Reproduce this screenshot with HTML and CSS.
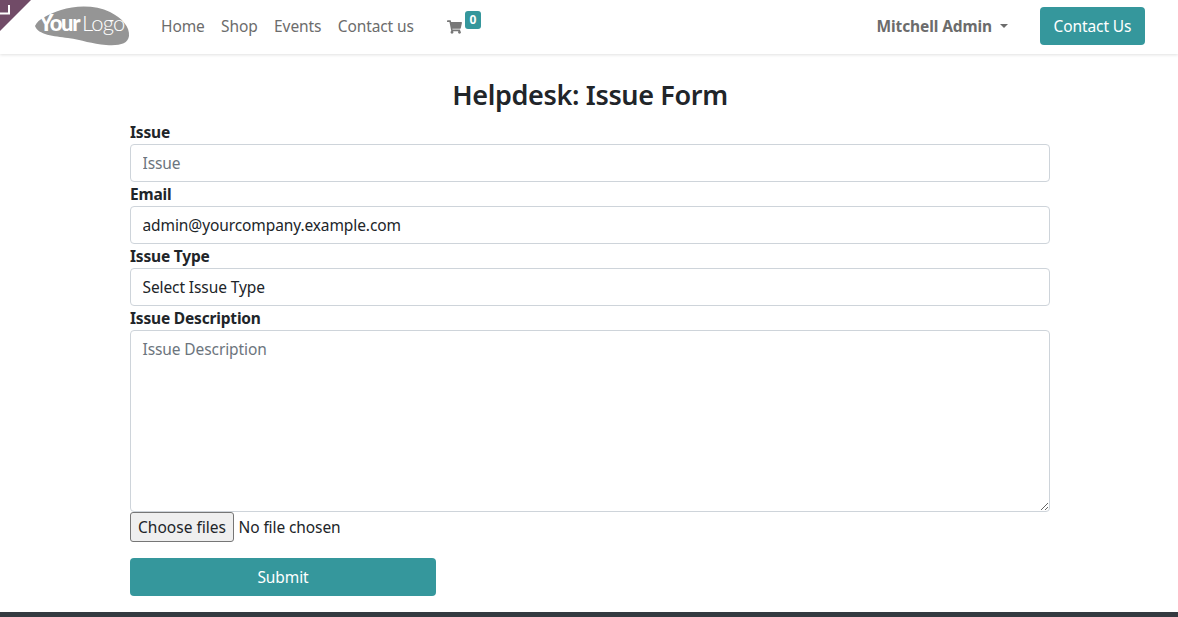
FILE: index.html
```html
<!DOCTYPE html>
<html lang="en">
<head>
<meta charset="utf-8">
<title>Helpdesk: Issue Form</title>
<link rel="stylesheet" href="styles.css">
</head>
<body>
<div class="page">
  <div class="ribbon">
    <svg width="32" height="32" viewBox="0 0 32 32"><polygon points="0,0 31,0 0,31" fill="#714b67"/><path d="M0 13.5H9V5" fill="none" stroke="#fff" stroke-width="2"/></svg>
  </div>
  <header class="navbar">
    <a class="logo" href="#">
      <svg width="96" height="42" viewBox="0 0 96 42">
        <path d="M1 21C4 14 15 9 27 5C42 0 62 0 76 7C88 13 96 22 95 31C94 39 85 41 72 40C58 39 48 35 34 33C20 31 4 30 1 21Z" fill="#959595"/>
        <text x="5" y="26" class="logo-your">Your</text>
        <text x="48" y="26" class="logo-logo">Logo</text>
      </svg>
    </a>
    <nav class="nav-links">
      <a href="#">Home</a>
      <a href="#">Shop</a>
      <a href="#">Events</a>
      <a href="#">Contact us</a>
    </nav>
    <a class="cart" href="#">
      <svg width="15" height="14" viewBox="0 0 576 512"><path fill="#777" d="M528 301l47-208c3-15-8-29-23-29H159l-9-45C148 8 138 0 126 0H24C11 0 0 11 0 24v16c0 13 11 24 24 24h70l70 343c-17 10-28 28-28 49 0 31 25 56 56 56s56-25 56-56c0-16-6-30-17-40h210c-11 10-17 24-17 40 0 31 25 56 56 56s56-25 56-56c0-22-13-41-32-50l6-25c3-15-8-29-23-29H212l-7-32h300c11 0 21-8 23-19z"/></svg>
      <span class="badge">0</span>
    </a>
    <a class="user" href="#">Mitchell Admin<span class="caret"></span></a>
    <a class="btn-contact" href="#">Contact Us</a>
  </header>
  <main class="content">
    <h1 class="title">Helpdesk: Issue Form</h1>
    <form class="form">
      <label class="field-label" for="issue">Issue</label>
      <input class="control" id="issue" type="text" placeholder="Issue">
      <label class="field-label" for="email">Email</label>
      <input class="control" id="email" type="text" value="admin@yourcompany.example.com">
      <label class="field-label" for="type">Issue Type</label>
      <select class="control select" id="type"><option>Select Issue Type</option></select>
      <label class="field-label" for="desc">Issue Description</label>
      <textarea class="control area" id="desc" placeholder="Issue Description"></textarea>
      <div class="file-row">
        <button class="file-btn" type="button">Choose files</button>
        <span class="file-name">No file chosen</span>
      </div>
      <button class="submit" type="button">Submit</button>
    </form>
  </main>
  <footer class="footer"></footer>
</div>
</body>
</html>
```
FILE: styles.css
```css
* { box-sizing: border-box; }
html, body { margin: 0; height: 100%; }
body { font-family: "Noto Sans", "Open Sans", sans-serif; font-size: 15.5px; letter-spacing: -.1px; color: #212529; background: #fff; overflow: hidden; }
a { text-decoration: none; color: inherit; }
.page { height: 617px; display: flex; flex-direction: column; position: relative; }
.ribbon { position: absolute; left: 0; top: 0; width: 32px; height: 32px; z-index: 2; line-height: 0; }
.navbar { height: 54px; flex: none; display: flex; align-items: center; padding: 0 33px 0 34px; box-shadow: 0 1px 3px rgba(0,0,0,.12); background: #fff; }
.logo { width: 96px; height: 42px; display: block; line-height: 0; margin-top: -3px; }
.logo-your { font-family: "Lato", sans-serif; font-weight: 900; font-size: 22px; fill: #fff; letter-spacing: -1.3px; }
.logo-logo { font-family: "Lato", sans-serif; font-weight: 300; font-size: 22px; fill: #fff; letter-spacing: -.8px; }
.nav-links { display: flex; gap: 16.4px; margin-left: 31px; color: #6c6c6c; margin-top: -2px; }
.cart { display: flex; align-items: flex-start; margin-left: 33px; position: relative; height: 24px; margin-top: -2px; }
.cart svg { margin-top: 6px; }
.badge { background: #35979c; color: #fff; font-size: 12px; font-weight: 700; line-height: 12px; letter-spacing: 0; border-radius: 3px; padding: 3px 0; margin: -3px 0 0 3px; height: 18px; width: 16px; text-align: center; }
.user { margin-left: auto; font-weight: 700; color: #6c6c6c; display: flex; align-items: center; margin-top: -2px; margin-right: 1px; }
.caret { width: 0; height: 0; border-top: 4px solid #6c6c6c; border-left: 4px solid transparent; border-right: 4px solid transparent; margin-left: 8px; }
.btn-contact { margin-left: 31px; background: #35979c; color: #fff; height: 38px; width: 105px; border-radius: 4px; display: flex; align-items: center; justify-content: center; margin-top: -2px; }
.content { flex: 1; width: 920px; margin-left: 130px; }
.title { margin: 24px 0 0; font-size: 27px; line-height: 34px; font-weight: 600; letter-spacing: -.35px; text-align: center; }
.form { display: flex; flex-direction: column; align-items: flex-start; margin-top: 9px; }
.field-label { display: block; height: 24px; line-height: 24px; font-weight: 700; letter-spacing: -.18px; color: #212529; }
.form .field-label:first-child { height: 23px; line-height: 23px; }
.control { width: 100%; height: 38px; border: 1px solid #ced4da; border-radius: 4px; padding: 6px 11.5px; font: inherit; letter-spacing: inherit; line-height: 24px; color: #212529; background: #fff; outline: none; }
.control::placeholder { color: #6c757d; opacity: 1; }
.select { appearance: none; -webkit-appearance: none; }
.area { height: 182px; resize: vertical; display: block; }
.file-row { display: flex; align-items: center; gap: 4.5px; height: 30px; }
.file-btn { height: 30px; width: 104px; padding: 0; background: #efefef; border: 1px solid #767676; border-radius: 3px; font: inherit; letter-spacing: 0; color: #212529; }
.file-name { color: #212529; }
.submit { margin-top: 16px; width: 306px; height: 38px; background: #35979c; color: #fff; border: 0; border-radius: 4px; font: inherit; letter-spacing: inherit; }
.footer { height: 5px; flex: none; background: #343a40; }
```
